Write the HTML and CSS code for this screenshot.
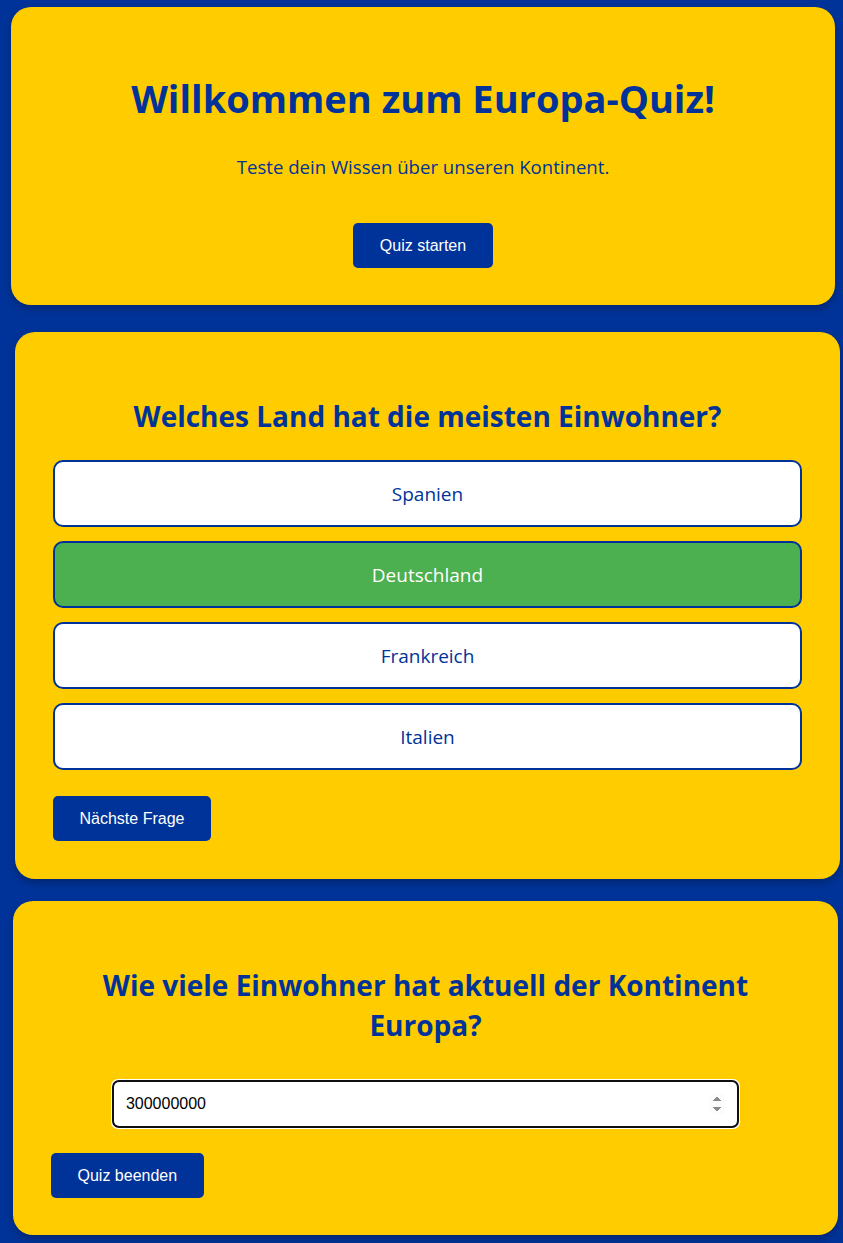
FILE: index.html
```html
<!DOCTYPE html>
<html lang="de">
<head>
    <meta charset="UTF-8">
    <meta name="viewport" content="width=device-width, initial-scale=1.0">
    <title>Europa-Quiz</title>
    <link rel="stylesheet" href="styles.css">
</head>
<body>
    <main class="page">
        <section class="card card--intro">
            <h1>Willkommen zum Europa-Quiz!</h1>
            <p class="intro-text">Teste dein Wissen über unseren Kontinent.</p>
            <button class="btn" type="button">Quiz starten</button>
        </section>

        <section class="card card--choice">
            <h2>Welches Land hat die meisten Einwohner?</h2>
            <div class="options">
                <button class="option" type="button">Spanien</button>
                <button class="option option--correct" type="button">Deutschland</button>
                <button class="option" type="button">Frankreich</button>
                <button class="option" type="button">Italien</button>
            </div>
            <div class="actions">
                <button class="btn" type="button">Nächste Frage</button>
            </div>
        </section>

        <section class="card card--input">
            <h2>Wie viele Einwohner hat aktuell der Kontinent Europa?</h2>
            <div class="answer-row">
                <input class="answer" type="number" value="300000000" autofocus>
            </div>
            <div class="actions">
                <button class="btn" type="button">Quiz beenden</button>
            </div>
        </section>
    </main>
</body>
</html>
```

FILE: styles.css
```css
body {
    font-family: "Open Sans", "Noto Sans", sans-serif;
    background-color: #003399;
    color: #003399;
    margin: 0;
    padding: 0;
}

.page {
    display: flex;
    flex-direction: column;
    padding: 7px 0 8px;
}

.card {
    background: #ffcc00;
    border-radius: 20px;
    box-shadow: 0 4px 8px rgba(0, 0, 0, 0.25);
    padding: 40px 38px 37px;
    text-align: center;
}

.card--intro {
    margin: 0 8px 0 11px;
}

.card--choice {
    margin: 27px 3px 0 15px;
    padding-bottom: 38px;
}

.card--input {
    margin: 22px 5px 0 13px;
}

h1 {
    font-size: 38px;
    font-weight: 700;
    line-height: 48px;
    margin: 27px 0 32px;
}

h2 {
    font-size: 28px;
    font-weight: 700;
    line-height: 40px;
    margin: 24px 0 24px;
}

.intro-text {
    font-size: 18.6px;
    line-height: 26px;
    margin: 0 0 43px;
}

.btn {
    font-family: "Liberation Sans", Arial, sans-serif;
    font-size: 16px;
    line-height: 19px;
    padding: 13px 26.5px;
    background-color: #003399;
    color: white;
    border: none;
    border-radius: 5px;
    cursor: pointer;
}

.options {
    display: flex;
    flex-direction: column;
    gap: 14px;
}

.option {
    font-family: "Open Sans", "Noto Sans", sans-serif;
    font-size: 19px;
    line-height: 24px;
    padding: 19.5px 16px;
    background: white;
    color: #003399;
    border: 2px solid #003399;
    border-radius: 10px;
    cursor: pointer;
}

.option--correct {
    background-color: #4caf50;
    color: white;
}

.actions {
    display: flex;
    margin-top: 26px;
}

.card--input h2 {
    margin-bottom: 35px;
}

.card--input .actions {
    margin-top: 25px;
}

.answer-row {
    display: flex;
    justify-content: center;
}

.answer {
    width: 80%;
    height: 20px;
    font-family: "Liberation Sans", Arial, sans-serif;
    font-size: 16px;
    line-height: 20px;
    padding: 12px;
    border: 2px solid #101010;
    border-radius: 6px;
    background: white;
    color: #000;
}
```
